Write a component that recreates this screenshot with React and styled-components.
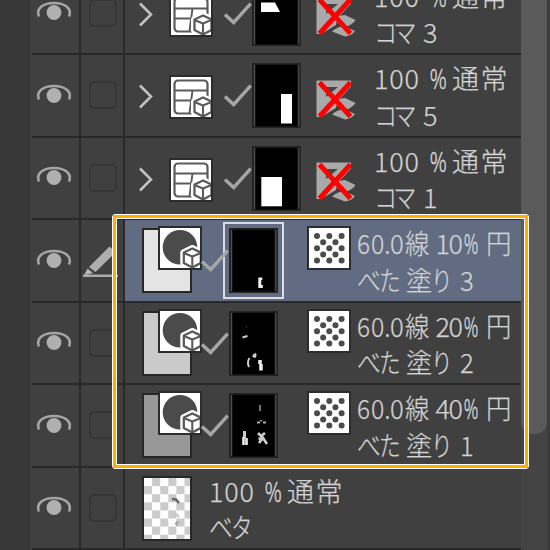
import React from 'react'
import styled, { createGlobalStyle } from 'styled-components'

const ROW_HEIGHT = 82.5

const COUNT = { t: '100', w: 55.5, ls: 0.8 }
const PERCENT = { t: '%', w: 22.5, s: 0.68, bold: true }
const NORMAL = { t: '通常', w: 60, ls: 1.5 }

const layers = [
  { kind: 'frame', num: '3' },
  { kind: 'frame', num: '5' },
  { kind: 'frame', num: '1' },
  { kind: 'tone', num: '3', density: '10', fill: '#e4e4e4', selected: true },
  { kind: 'tone', num: '2', density: '20', fill: '#cacaca' },
  { kind: 'tone', num: '1', density: '40', fill: '#989898' },
  { kind: 'raster' },
]

const frameMasks = {
  3: <polygon points="9,21.5 23,21.5 28,31 9,31" fill="#fff" />,
  5: <rect x="29" y="31" width="11" height="29.5" fill="#fff" />,
  1: <rect x="9.3" y="31" width="20.7" height="29.3" fill="#fff" />,
}

const toneMasks = {
  3: <path d="M29.3 49.5h4v2.5h-1v5h1.500v3h-4.500z" fill="#eee" />,
  2: (
    <g stroke="#ccc" fill="none">
      <path d="M13.500 26.500l5-1.500" strokeWidth="2" />
      <circle cx="17.500" cy="16" r=".6" stroke="none" fill="#777" />
      <path d="M27 42.500l-3 3M20.500 47c-2 3-2 6-.5 9" strokeWidth="2" />
      <path d="M25 46.500l1-3" strokeWidth="3.500" />
      <path d="M31 49v4M32 53v6.500" strokeWidth="3.500" stroke="#eee" />
    </g>
  ),
  1: (
    <g stroke="#ccc" fill="none">
      <path d="M31 12v6" strokeWidth="1.500" stroke="#999" />
      <path d="M28 29.500h3M34 29.500h3M32 27v1.500" strokeWidth="1.800" stroke="#aaa" />
      <path d="M15.500 38v7" strokeWidth="3" />
      <path d="M14.500 44v8M17.500 45v7" strokeWidth="2.600" stroke="#eee" />
      <path d="M29 40l3 3 4-3M30 50l4-5 4 6M29.500 46l4-1" strokeWidth="2.600" />
    </g>
  ),
}

function frameLines (num) {
  return [
    [COUNT, PERCENT, NORMAL],
    [{ t: 'コマ', w: 49, s: 0.86, ls: -4.500 }, { t: num, w: 18 }],
  ]
}

function toneLines (num, density) {
  return [
    [
      { t: '6', w: 14, s: 0.9 },
      { t: '0.', w: 19, s: 0.92 },
      { t: '0', w: 14.5, s: 0.95 },
      { t: '線', w: 31, s: 0.9 },
      { t: density[0], w: 13 },
      { t: density[1], w: 15.500 },
      { t: '%', w: 21.500, s: 0.58, bold: true },
      { t: '円', w: 27, s: 0.94 },
    ],
    [
      { t: 'べ', w: 22, s: 0.88 },
      { t: 'た', w: 26.5, s: 0.8 },
      { t: '塗', w: 25, s: 0.97 },
      { t: 'り', w: 29.500, s: 0.8 },
      { t: num, w: 18, s: 0.95 },
    ],
  ]
}

const rasterLines = [
  [COUNT, PERCENT, NORMAL],
  [{ t: 'ベ', w: 22, s: 0.88 }, { t: 'タ', w: 24, s: 0.8 }],
]

function Label ({ lines, gap }) {
  return (
    <Texts $gap={gap}>
      {lines.map((runs, idx) => (
        <Line key={idx}>
          {runs.map((run, i) => (
            <Run key={i} $w={run.w} $s={run.s} $ls={run.ls} $bold={run.bold}>{run.t}</Run>
          ))}
        </Line>
      ))}
    </Texts>
  )
}

function Eye () {
  return (
    <EyeIcon width="36" height="20" viewBox="0 0 36 20" fill="none">
      <path d="M3 15.500C-.5 7 8 2 18 2s18.500 5 15 13.500" stroke="#a5a5a5" strokeWidth="2.500" />
      <circle cx="18" cy="11.500" r="7.400" fill="#b0b0b0" />
    </EyeIcon>
  )
}

function Pencil () {
  return (
    <PencilIcon width="38" height="34" viewBox="0 0 38 34">
      <path d="M7 23L27.500 2.500l6.500 5.500-20.500 20z" fill="#aeaeae" />
      <path d="M5.500 24.500l5.500 4.500-9 2.500z" fill="#b5b5b5" />
      <path d="M1 31.700h35" stroke="#aaa" strokeWidth="2.600" />
    </PencilIcon>
  )
}

function Cube () {
  return (
    <g strokeLinejoin="round">
      <path d="M0-10L9-5.500V5.500L0 10l-9-4.500v-11z" fill="#fff" stroke="#fff" strokeWidth="6" />
      <path d="M0-9.500l8.500 4V5L0 9.500-8.500 5v-10.500z" fill="#fff" stroke="#5a5a5a" strokeWidth="2.300" />
      <path d="M-8.500-5L0-1.500 8.500-5M0-1.500v11" fill="none" stroke="#5a5a5a" strokeWidth="2.100" />
    </g>
  )
}

function FrameIcon () {
  return (
    <IconTile $gap={16}>
      <svg width="40" height="40" viewBox="2 2 40 40" fill="none">
        <rect x="5.500" y="5.500" width="33" height="33" rx="3.500" stroke="#5a5a5a" strokeWidth="2.200" />
        <path d="M5.500 15.500h33M5.500 25.500h16.500M23.500 15.500L20.500 38" stroke="#5a5a5a" strokeWidth="1.900" />
        <g transform="translate(34 32)"><Cube /></g>
      </svg>
    </IconTile>
  )
}

function ToneSwatch ({ fill }) {
  return (
    <Swatch>
      <Paper $fill={fill} />
      <SwatchTile>
        <svg width="40" height="40" viewBox="2 2 40 40">
          <circle cx="22" cy="21.300" r="17.300" fill="#4b4b4b" />
          <g transform="translate(34.300 32)"><Cube /></g>
        </svg>
      </SwatchTile>
    </Swatch>
  )
}

function Check () {
  return (
    <svg width="28" height="23" viewBox="0 0 28 23" fill="none">
      <path d="M1 12.500l8.700 8L26.700 1.700" stroke="#a6a6a6" strokeWidth="3.400" />
    </svg>
  )
}

function Mask ({ selected, children }) {
  return (
    <MaskBox $selected={selected}>
      <svg width="49" height="65" viewBox="0 0 49 65">
        <rect width="49" height="65" fill="#242424" />
        <path d="M2.500 2v61M46.800 2v61" stroke="#505050" />
        <rect x="3.500" y="1.700" width="42" height="61.800" fill="#000" />
        {children}
      </svg>
    </MaskBox>
  )
}

function RulerOff () {
  return (
    <RulerIcon width="40" height="40" viewBox="0 0 40 40">
      <path d="M.5 0.500h34.500v6L20 23v5L5 37H.5z" fill="#a9a9a9" />
      <path d="M10 7h12L10 17z" fill="#454545" />
      <path d="M16 23.500Q22 18.500 29 18l10.500 5Q37 27.500 29 30zM16 34.500Q22 29 29 29.500l10 4.500Q36 38.500 29 39.500z" fill="#a9a9a9" />
      <path d="M3.500 2.500l31 34M34.500 2.500l-31 34" stroke="#fe0000" strokeWidth="5" />
    </RulerIcon>
  )
}

function Pattern () {
  const dots = []
  for (let r = 0; r < 5; r++) {
    for (let c = 0; c < 5; c++) {
      if ((r + c) % 2 === 0) {
        dots.push(<circle key={`${r}-${c}`} cx={8 + c * 6.150} cy={8 + r * 6.150} r="3" fill="#4b4b4b" />)
      }
    }
  }
  return (
    <PatternTile>
      <svg width="40" height="40">{dots}</svg>
    </PatternTile>
  )
}

function Checker () {
  const cells = []
  for (let r = 0; r < 8; r++) {
    for (let c = 0; c < 6; c++) {
      if ((r + c) % 2 === 1) {
        cells.push(<rect key={`${r}-${c}`} x={c * 8.100} y={r * 8.100} width="8.100" height="8.100" fill="#cbcbcb" />)
      }
    }
  }
  return (
    <Paper $fill="#fff">
      <svg width="47" height="61.500">
        {cells}
        <path d="M28 21l4 .5 3 3.500" stroke="#666" strokeWidth="2.400" fill="none" />
        <path d="M31 46l4-2M33 43v5" stroke="#aaa" strokeWidth="2" />
        <path d="M32 36l3 3" stroke="#c4c4c4" strokeWidth="2" />
      </svg>
    </Paper>
  )
}

function Layer ({ layer }) {
  const { kind, num, density, fill, selected } = layer
  return (
    <Row>
      <EyeCell><Eye /></EyeCell>
      <LockCell>{selected ? <Pencil /> : <LockBox />}</LockCell>
      <Content $selected={selected}>
        {kind === 'frame' && <>
          <Chevron width="14" height="25" viewBox="0 0 14 25" fill="none">
            <path d="M1 1.500l11 11L1 23.500" stroke="#c2c2c2" strokeWidth="2.500" />
          </Chevron>
          <FrameIcon />
          <CheckSlot $gap={11}><Check /></CheckSlot>
          <Mask>{frameMasks[num]}</Mask>
          <RulerOff />
          <Label lines={frameLines(num)} gap={18} />
        </>}
        {kind === 'tone' && <>
          <ToneSwatch fill={fill} />
          <CheckSlot $gap={-1}><Check /></CheckSlot>
          <Mask selected={selected}>{toneMasks[num]}</Mask>
          <Pattern />
          <Label lines={toneLines(num, density)} gap={6} />
        </>}
        {kind === 'raster' && <>
          <Swatch><Checker /></Swatch>
          <Label lines={rasterLines} gap={7} />
        </>}
      </Content>
    </Row>
  )
}

function App () {
  return (
    <Panel>
      <GlobalStyle />
      <Gutter />
      <List>
        {layers.map((layer, idx) => <Layer key={idx} layer={layer} />)}
      </List>
      <ScrollTrack>
        <ScrollThumb />
      </ScrollTrack>
      <Highlight />
    </Panel>
  )
}

const GlobalStyle = createGlobalStyle`
  body {
    margin: 0;
    overflow: hidden;
    background: #383838;
  }
  svg {
    display: block;
    flex-shrink: 0;
  }
`

const Panel = styled.div`
  position: relative;
  display: flex;
  width: 550px;
  height: 550px;
  overflow: hidden;
  background: #404040;
  color: #d2d2d2;
  font-family: "Noto Sans CJK JP", sans-serif;
  font-size: 27px;
  font-weight: 300;
`

const Gutter = styled.div`
  box-sizing: border-box;
  flex: 0 0 32px;
  background: #383838;
  border-right: 2px solid #404040;
  box-shadow: inset -1px 0 #333;
`

const List = styled.div`
  flex: 0 0 489px;
  margin-top: -27.25px;
`

const Row = styled.div`
  box-sizing: border-box;
  display: flex;
  height: ${ROW_HEIGHT}px;
  border-bottom: 2px solid #292929;
`

const Cell = styled.div`
  box-sizing: border-box;
  display: flex;
  align-items: center;
  justify-content: center;
  border-right: 2px solid #292929;
`

const EyeCell = styled(Cell)`
  flex: 0 0 49px;
`

const LockCell = styled(Cell)`
  flex: 0 0 44px;
`

const EyeIcon = styled.svg`
  margin: 0 3px 4px 0;
`

const PencilIcon = styled.svg`
  margin: 1px 3px 0 0;
`

const LockBox = styled.div`
  box-sizing: border-box;
  width: 28px;
  height: 28px;
  margin: 0 0 1px 2px;
  border: 2px solid #363636;
  border-radius: 5px;
`

const Content = styled.div`
  display: flex;
  align-items: center;
  flex: 1;
  min-width: 0;
  background: ${_ => _.$selected ? '#616b81' : 'transparent'};
`

const Chevron = styled.svg`
  margin: 2px 0 0 14px;
`

const Tile = styled.div`
  box-sizing: border-box;
  flex-shrink: 0;
  width: 44px;
  height: 44px;
  border: 2px solid #2c2c2c;
  background: #fff;
  overflow: hidden;
`

const IconTile = styled(Tile)`
  margin: 3px 0 0 ${_ => _.$gap}px;
`

const Swatch = styled.div`
  position: relative;
  flex-shrink: 0;
  width: 60px;
  height: 65px;
  margin-left: 17px;
`

const Paper = styled.div`
  box-sizing: border-box;
  width: 50px;
  height: 65px;
  border: 2px solid #272727;
  background: ${_ => _.$fill};
  overflow: hidden;
`

const SwatchTile = styled(Tile)`
  position: absolute;
  left: 16px;
  top: -2px;
`

const CheckSlot = styled.div`
  position: relative;
  z-index: 1;
  flex: 0 0 28px;
  margin-left: ${_ => _.$gap}px;
`

const MaskBox = styled.div`
  flex-shrink: 0;
  outline: ${_ => _.$selected ? '2px solid #dadde3' : 'none'};
  outline-offset: 4px;
`

const RulerIcon = styled.svg`
  margin: 8px 0 0 15px;
`

const PatternTile = styled(Tile)`
  align-self: flex-start;
  margin: 6px 0 0 29px;
`

const Texts = styled.div`
  align-self: flex-start;
  margin: 3px 0 0 ${_ => _.$gap}px;
`

const Line = styled.div`
  display: flex;
  height: 36.5px;
  line-height: 40px;
  white-space: pre;
`

const Run = styled.span`
  flex: 0 0 ${_ => _.$w}px;
  width: ${_ => _.$w}px;
  letter-spacing: ${_ => _.$ls || 0}px;
  transform: scaleX(${_ => _.$s || 1});
  transform-origin: left center;
  -webkit-text-stroke: ${_ => _.$bold ? 0.6 : 0.25}px currentColor;
`

const ScrollTrack = styled.div`
  box-sizing: border-box;
  flex: 0 0 29px;
  background: #444;
  border-right: 3px solid #3b3b3b;
`

const ScrollThumb = styled.div`
  height: 434px;
  background: #5a5a5a;
  border-radius: 0 0 12px 12px;
`

const Highlight = styled.div`
  position: absolute;
  left: 112px;
  top: 214px;
  box-sizing: border-box;
  width: 417px;
  height: 255px;
  border: 1.5px solid #fff;
  border-radius: 3px;

  &::before {
    content: '';
    position: absolute;
    inset: 0;
    border: 3px solid #ffae00;
  }

  &::after {
    content: '';
    position: absolute;
    inset: 3px;
    border: 1px solid #fff;
  }
`

export default App
